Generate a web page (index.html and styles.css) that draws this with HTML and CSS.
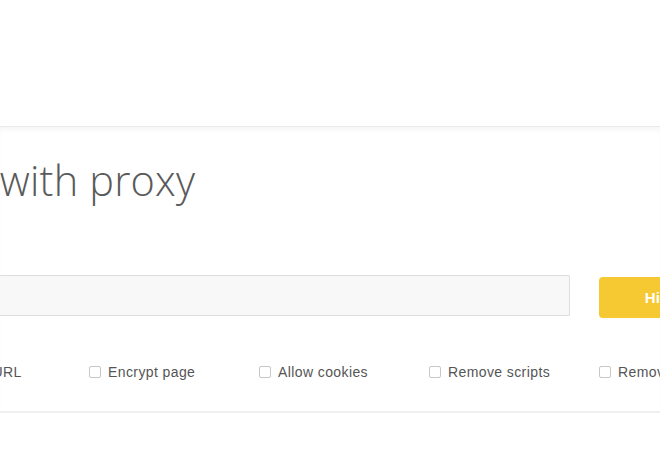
FILE: index.html
```html
<!DOCTYPE html>
<html lang="en">
<head>
    <meta charset="UTF-8">
    <title>Browse with proxy</title>
    <link rel="stylesheet" href="styles.css">
</head>
<body>
    <div class="top"></div>
    <section class="proxy">
        <div class="wrap">
            <h1 class="title">Browse with proxy</h1>
            <form class="search" action="#" method="get">
                <input type="text" name="url" class="url">
                <button type="submit" class="go">Hide me</button>
            </form>
            <div class="options">
                <label class="opt"><input type="checkbox"> Encrypt URL</label>
                <label class="opt"><input type="checkbox"> Encrypt page</label>
                <label class="opt"><input type="checkbox"> Allow cookies</label>
                <label class="opt"><input type="checkbox"> Remove scripts</label>
                <label class="opt"><input type="checkbox"> Remove objects</label>
            </div>
        </div>
    </section>
</body>
</html>
```

FILE: styles.css
```css
body {
    margin: 0;
    overflow: hidden;
    background: #fff;
    font-family: "Liberation Sans", Arial, sans-serif;
}
.top {
    height: 126px;
}
.proxy {
    border-top: 1px solid #e9e9e9;
    border-bottom: 2px solid #efefef;
    box-shadow: inset 0 5px 6px -3px rgba(0,0,0,0.05);
}
.wrap {
    margin-left: -340px;
    width: 1089px;
    padding-bottom: 27px;
}
.title {
    margin: 28px 0 0 189px;
    font-family: "Open Sans", sans-serif;
    font-weight: 300;
    font-size: 41.5px;
    letter-spacing: 0.2px;
    line-height: 50px;
    color: #5a5a5a;
    white-space: nowrap;
}
.search {
    display: flex;
    gap: 29px;
    margin-top: 70px;
}
.url {
    flex: 1;
    height: 41px;
    box-sizing: border-box;
    border: 1px solid #dedede;
    background: #f8f8f8;
    border-radius: 1px;
}
.go {
    width: 150px;
    height: 41px;
    margin-top: 2px;
    border: none;
    border-radius: 4px;
    background: #f6c933;
    color: #fff;
    font-family: "Liberation Sans", Arial, sans-serif;
    font-weight: bold;
    font-size: 15px;
}
.options {
    display: flex;
    margin-top: 44px;
    margin-bottom: 2px;
    padding-left: 259px;
}
.opt {
    width: 170px;
    flex: none;
    display: flex;
    align-items: center;
    gap: 7px;
    height: 20px;
    font-size: 14px;
    letter-spacing: 0.4px;
    color: #555;
    white-space: nowrap;
}
.opt input {
    appearance: none;
    width: 12px;
    height: 12px;
    margin: 0;
    border: 1px solid #c8c8c8;
    border-radius: 2px;
    background: #fff;
}
```
